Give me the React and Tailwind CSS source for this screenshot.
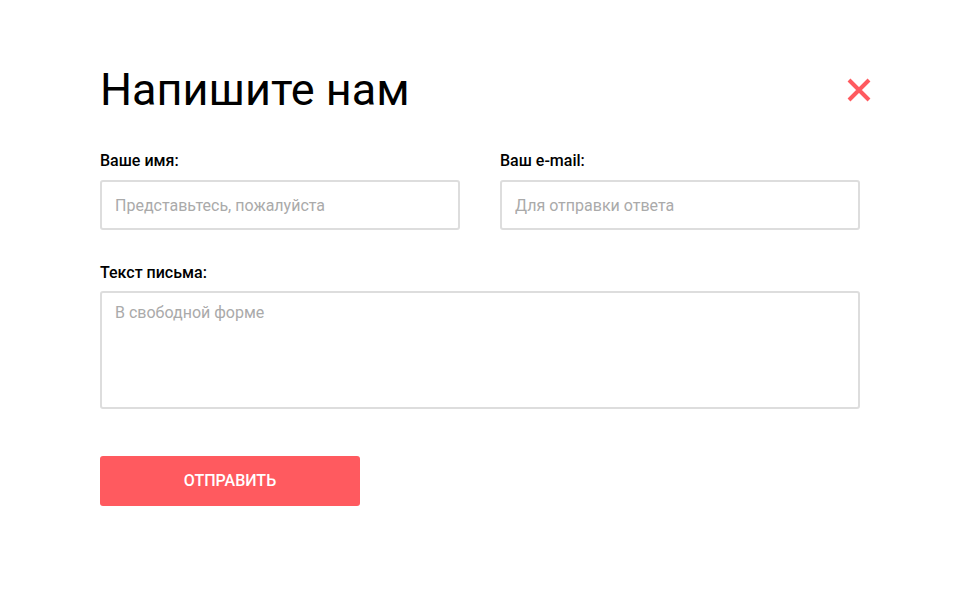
export default function App() {
  const inputCls =
    "w-full h-[50px] border-2 border-[#dddddd] rounded-[3px] px-[13px] text-[16px] text-[#333] placeholder:text-[#aaaaaa] outline-none";

  return (
    <div className="min-h-[590px] w-[960px] bg-white font-['Roboto',sans-serif]">
      <div className="mx-auto w-[760px] pt-[65px]">
        <div className="flex items-center justify-between">
          <h1 className="text-[45px] leading-[50px] font-normal text-black">
            Напишите нам
          </h1>
          <button className="mr-[-19px] flex h-[40px] w-[40px] items-center justify-center">
            <svg width="24" height="24" viewBox="0 0 24 24">
              <path
                d="M2 2 L22 22 M22 2 L2 22"
                stroke="#ff5a5f"
                strokeWidth="4"
                strokeLinecap="butt"
              />
            </svg>
          </button>
        </div>

        <div className="mt-[37px] grid grid-cols-2 gap-x-[40px]">
          <label className="flex flex-col">
            <span className="text-[16px] font-medium leading-[18px] text-black">
              Ваше имя:
            </span>
            <input className={`mt-[10px] ${inputCls}`} placeholder="Представьтесь, пожалуйста" />
          </label>
          <label className="flex flex-col">
            <span className="text-[16px] font-medium leading-[18px] text-black">
              Ваш e-mail:
            </span>
            <input className={`mt-[10px] ${inputCls}`} placeholder="Для отправки ответа" />
          </label>
        </div>

        <label className="mt-[34px] flex flex-col">
          <span className="text-[16px] font-medium leading-[18px] text-black">
            Текст письма:
          </span>
          <textarea
            className="mt-[9px] h-[118px] w-full resize-none rounded-[3px] border-2 border-[#dddddd] px-[13px] py-[10px] text-[16px] leading-[20px] text-[#333] placeholder:text-[#aaaaaa] outline-none"
            placeholder="В свободной форме"
          />
        </label>

        <button className="mt-[47px] h-[50px] w-[260px] rounded-[3px] bg-[#ff5a5f] text-[16px] font-medium uppercase text-white">
          Отправить
        </button>
      </div>
    </div>
  );
}
